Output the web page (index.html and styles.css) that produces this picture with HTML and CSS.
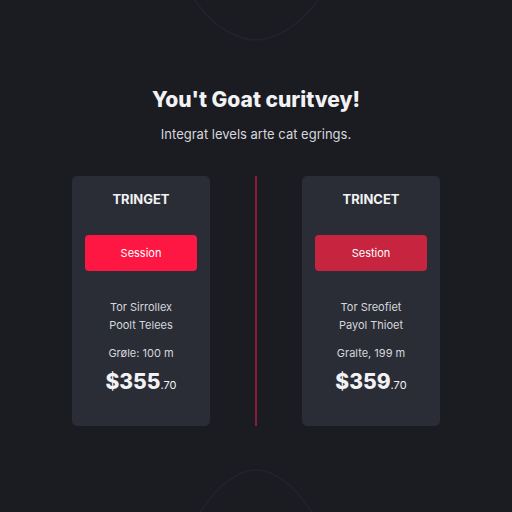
FILE: index.html
```html
<!DOCTYPE html>
<html lang="en">
<head>
    <meta charset="UTF-8">
    <meta name="viewport" content="width=device-width, initial-scale=1.0">
    <title>Plans</title>
    <link rel="stylesheet" href="styles.css">
</head>
<body>
    <svg class="backdrop" width="512" height="512" viewBox="0 0 512 512">
        <path d="M195 0 C 215 30, 240 40, 256 40 C 275 40, 300 25, 318 0" />
        <path d="M200 512 C 215 490, 235 470, 256 470 C 277 470, 297 490, 312 512" />
    </svg>

    <main>
        <h1 class="title">You't Goat curitvey!</h1>
        <p class="subtitle">Integrat levels arte cat egrings.</p>

        <div class="plans">
            <div class="plan">
                <h2>TRINGET</h2>
                <button class="btn btn-bright">Session</button>
                <div class="details">
                    <span>Tor Sirrollex</span>
                    <span>Poolt Telees</span>
                </div>
                <div class="meta">Grøle: 100 m</div>
                <div class="price">$355<small>.70</small></div>
            </div>

            <div class="divider"></div>

            <div class="plan">
                <h2>TRINCET</h2>
                <button class="btn btn-muted">Sestion</button>
                <div class="details">
                    <span>Tor Sreofiet</span>
                    <span>Payol Thioet</span>
                </div>
                <div class="meta">Gralte, 199 m</div>
                <div class="price">$359<small>.70</small></div>
            </div>
        </div>
    </main>
</body>
</html>
```

FILE: styles.css
```css
:root {
    --bg-color: #1b1c21;
    --card-bg: #2a2d35;
    --text-color: #f2f2f4;
    --muted-text: #d6d7dc;
    --bright-red: #ff1744;
    --muted-red: #c7243f;
}

* {
    margin: 0;
    padding: 0;
    box-sizing: border-box;
}

body {
    width: 512px;
    height: 512px;
    overflow: hidden;
    position: relative;
    font-family: Inter, "Noto Sans", sans-serif;
    background-color: var(--bg-color);
    color: var(--text-color);
}

/* faint arcs peeking in at the top and bottom edges */
.backdrop {
    position: absolute;
    top: 0;
    left: 0;
    pointer-events: none;
}

.backdrop path {
    fill: none;
    stroke: #21242f;
    stroke-width: 1.5;
}

main {
    position: relative;
    display: flex;
    flex-direction: column;
    align-items: center;
    padding-top: 87px;
}

.title {
    font-size: 21px;
    font-weight: 800;
    line-height: 26px;
}

.subtitle {
    margin-top: 13px;
    font-size: 13px;
    color: var(--muted-text);
    line-height: 16px;
}

.plans {
    display: flex;
    gap: 46px;
    margin-top: 34px;
}

.plan {
    width: 138px;
    height: 250px;
    background-color: var(--card-bg);
    border-radius: 5px;
    display: flex;
    flex-direction: column;
    align-items: center;
    padding: 15px 13px 0;
}

.plan h2 {
    font-size: 13px;
    font-weight: 700;
    line-height: 16px;
}

.btn {
    width: 100%;
    height: 36px;
    margin-top: 28px;
    border: none;
    border-radius: 4px;
    color: #fff;
    font-family: inherit;
    font-size: 11px;
}

.btn-bright {
    background-color: var(--bright-red);
}

.btn-muted {
    background-color: var(--muted-red);
}

.details {
    display: flex;
    flex-direction: column;
    align-items: center;
    gap: 4px;
    margin-top: 29px;
    font-size: 11px;
    line-height: 14px;
    color: var(--muted-text);
}

.meta {
    margin-top: 14px;
    font-size: 11px;
    line-height: 14px;
    color: var(--muted-text);
}

.price {
    margin-top: 10px;
    font-size: 21px;
    font-weight: 800;
    line-height: 24px;
}

.price small {
    font-size: 11px;
    font-weight: 400;
}

.divider {
    width: 2px;
    height: 250px;
    background-color: #8e1a3c;
    margin: 0 -1px;
}
```
